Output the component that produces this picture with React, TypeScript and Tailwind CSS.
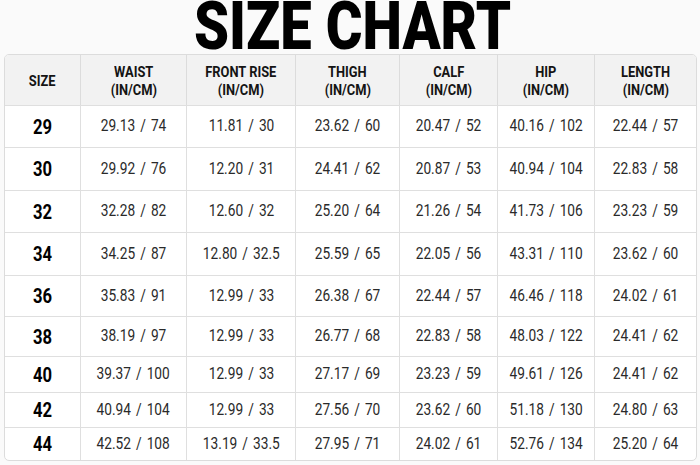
import { Fragment, type ReactNode } from "react";

const COLUMNS = [
  { label: "SIZE", unit: "" },
  { label: "WAIST", unit: "(IN/CM)" },
  { label: "FRONT RISE", unit: "(IN/CM)" },
  { label: "THIGH", unit: "(IN/CM)" },
  { label: "CALF", unit: "(IN/CM)" },
  { label: "HIP", unit: "(IN/CM)" },
  { label: "LENGTH", unit: "(IN/CM)" },
];

const ROWS: { size: string; h: string; cells: string[] }[] = [
  { size: "29", h: "h-[42px]", cells: ["29.13 / 74", "11.81 / 30", "23.62 / 60", "20.47 / 52", "40.16 / 102", "22.44 / 57"] },
  { size: "30", h: "h-[43px]", cells: ["29.92 / 76", "12.20 / 31", "24.41 / 62", "20.87 / 53", "40.94 / 104", "22.83 / 58"] },
  { size: "32", h: "h-[42px]", cells: ["32.28 / 82", "12.60 / 32", "25.20 / 64", "21.26 / 54", "41.73 / 106", "23.23 / 59"] },
  { size: "34", h: "h-[43px]", cells: ["34.25 / 87", "12.80 / 32.5", "25.59 / 65", "22.05 / 56", "43.31 / 110", "23.62 / 60"] },
  { size: "36", h: "h-[41px]", cells: ["35.83 / 91", "12.99 / 33", "26.38 / 67", "22.44 / 57", "46.46 / 118", "24.02 / 61"] },
  { size: "38", h: "h-[40px]", cells: ["38.19 / 97", "12.99 / 33", "26.77 / 68", "22.83 / 58", "48.03 / 122", "24.41 / 62"] },
  { size: "40", h: "h-[36px]", cells: ["39.37 / 100", "12.99 / 33", "27.17 / 69", "23.23 / 59", "49.61 / 126", "24.41 / 62"] },
  { size: "42", h: "h-[35px]", cells: ["40.94 / 104", "12.99 / 33", "27.56 / 70", "23.62 / 60", "51.18 / 130", "24.80 / 63"] },
  { size: "44", h: "h-[33px]", cells: ["42.52 / 108", "13.19 / 33.5", "27.95 / 71", "24.02 / 61", "52.76 / 134", "25.20 / 64"] },
];

// Roboto squeezed horizontally to stand in for Roboto Condensed
function Narrow({ children, className = "" }: { children: ReactNode; className?: string }) {
  return <span className={`inline-block scale-x-[0.83] whitespace-nowrap ${className}`}>{children}</span>;
}

export default function App() {
  return (
    <div className="h-[465px] w-[700px] overflow-hidden bg-[#fafafa] font-['Roboto',sans-serif]">
      <h1 className="flex h-[54px] justify-center pl-[5px] text-[66px] leading-[54px] font-black text-black">
        <Narrow className="scale-x-[0.85]">SIZE CHART</Narrow>
      </h1>

      <div className="ml-[4px] w-[693px] overflow-hidden rounded-[5px] border border-[#dcdcdc] bg-white">
        <div className="grid grid-cols-[75px_106px_109px_104px_98px_97px_102px]">
          {COLUMNS.map((col, i) => (
            <div
              key={col.label}
              className={`flex h-[50px] flex-col items-center justify-center bg-[#f2f2f2] pt-[1px] text-[15.5px] leading-[18px] font-bold text-[#141414] ${i > 0 ? "border-l border-[#dcdcdc]" : ""}`}
            >
              <Narrow>{col.label}</Narrow>
              {col.unit && <Narrow>{col.unit}</Narrow>}
            </div>
          ))}

          {ROWS.map((row) => (
            <Fragment key={row.size}>
              <div
                className={`flex ${row.h} items-center justify-center border-t border-[#dfdfdf] text-[20px] font-bold text-black`}
              >
                <Narrow>{row.size}</Narrow>
              </div>
              {row.cells.map((cell, j) => (
                <div
                  key={j}
                  className={`flex ${row.h} items-center justify-center border-t border-l border-[#dfdfdf] text-[16.5px] text-[#2a2a2a]`}
                >
                  <Narrow className="[word-spacing:2px]">{cell}</Narrow>
                </div>
              ))}
            </Fragment>
          ))}
        </div>
      </div>
    </div>
  );
}
